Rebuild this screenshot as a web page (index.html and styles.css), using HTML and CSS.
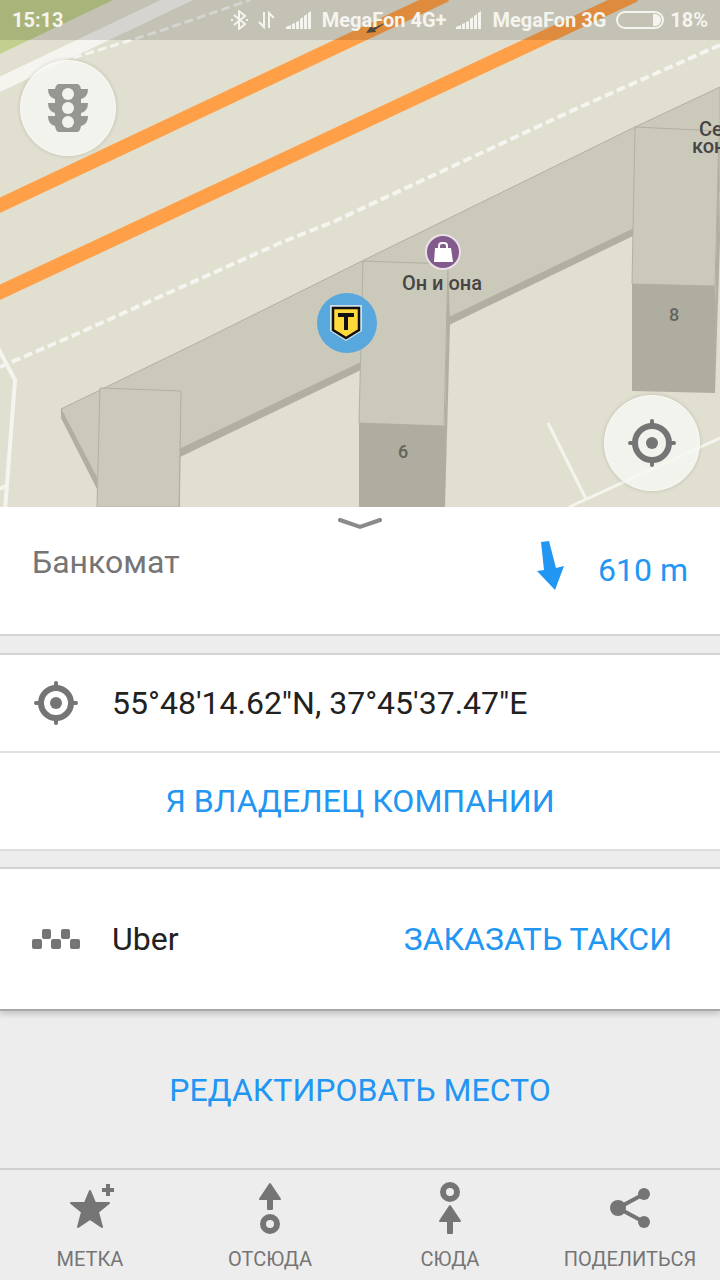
FILE: index.html
```html
<!DOCTYPE html>
<html lang="ru">

<head>
    <meta charset="utf-8">
    <meta name="viewport" content="width=device-width, initial-scale=1">
    <title>Банкомат</title>
    <link rel="stylesheet" href="styles.css">
</head>

<body>
    <!--Map with status bar-->
    <div class="map">
        <svg class="map-canvas" viewBox="0 0 720 507" preserveAspectRatio="xMidYMax slice">
            <!--Park-->
            <path fill="#c3cf8e" d="M0 0h113L0 54z" />

            <!--Roads-->
            <path class="road" stroke-width="14" d="M-10 89L200 -11" />
            <path class="road dashed" stroke-width="3" d="M73 58L157 32L250 0" />
            <path class="road dashed" stroke-width="4" d="M0 367L63 340L280 243L335 221L580 107L720 45" />
            <path class="highway" d="M-10 210L446 -5" />
            <path class="highway" d="M-10 297L635 -5" />
            <path class="road" stroke-width="4" d="M-2 348L15 380L5 510M-2 489L7 486" />
            <path class="road" stroke-width="3" d="M548 423L586 499M569 507L720 438" />
            <path fill="#5d5646" d="M366 33l5-7 2 2 14-6-12 8 1 2z" />

            <!--Buildings-->
            <path class="wall" d="M61 409V418L97 489V470zM180 446V457L361 370V355zM449 310V325L633 236V222z" />
            <path class="roof" d="M61 409L203 340L362 261L635 127L720 87V190L633 229L450 317L360 363L180 449L98 480z" />
            <path class="wall" d="M181 391L180 507H178V391zM448 262L450 325L445 507H443zM719 130L720 240L715 393H713z" />
            <path class="roof" d="M100 388L181 391L179 507H97z" />
            <path class="roof" d="M363 261L448 264L444 426L359 423z" />
            <path class="roof" d="M635 127L719 131L715 286L632 284z" />
            <path class="house" d="M359 423L445 426V507H359z" />
            <path class="house" d="M632 284L715 286V393L632 391z" />

            <!--Places-->
            <text class="house-number" x="403" y="458">6</text>
            <text class="house-number" x="674" y="321">8</text>
            <circle cx="443" cy="252" r="17" fill="#835a8c" stroke="#eadfe8" stroke-width="2" />
            <path fill="#fff" d="M435 248h16l2 14h-19z" />
            <path fill="none" stroke="#fff" stroke-width="2" d="M439 249v-3q0-3 3-3h2q3 0 3 3v3" />
            <text class="place" x="442" y="290">Он и она</text>
            <text class="place place-edge" x="699" y="136">Се<tspan x="692" dy="17">кон</tspan></text>
            <circle cx="347" cy="323" r="30" fill="#58a8de" />
            <path fill="#cfe0ea" d="M330 305h32v26l-16 10-16-10z" />
            <path fill="#ffd93b" stroke="#111" stroke-width="2.5" d="M333 308h26v22l-13 8-13-8z" />
            <path fill="#111" d="M338 313h16v4h-6v13h-4v-13h-6z" />
        </svg>

        <div class="statusbar">
            <span class="clock">15:13</span>
            <svg class="bluetooth" viewBox="0 0 20 20">
                <path d="M4 5l11 9-6 5V1l6 5-11 9" />
                <path d="M1 10h2M16 10h2" />
            </svg>
            <svg class="data" viewBox="0 0 20 20">
                <path d="M6 2v15l-5-5M11 18V3l5 5" />
            </svg>
            <svg class="signal" viewBox="0 0 26 18">
                <path d="M0 18v-2l5-2v4zM6 18v-5l3-1v6zM10 18v-7l3-1v8zM14 18V8l3-2v12zM18 18V5l3-2v15zM22 18V2l3-2v18z" />
            </svg>
            <span class="carrier">MegaFon 4G+</span>
            <svg class="signal" viewBox="0 0 26 18">
                <path d="M0 18v-2l5-2v4zM6 18v-5l3-1v6zM10 18v-7l3-1v8zM14 18V8l3-2v12zM18 18V5l3-2v15zM22 18V2l3-2v18z" />
            </svg>
            <span class="carrier">MegaFon 3G</span>
            <svg class="battery" viewBox="0 0 48 18">
                <rect x="1" y="1" width="46" height="16" rx="8" />
                <path d="M37 3h2a6 6 0 0 1 0 12h-2z" />
            </svg>
            <span>18%</span>
        </div>

        <button class="map-btn traffic" type="button" aria-label="Пробки">
            <svg width="40" height="48" viewBox="0 0 40 48">
                <path fill="#969791" d="M11 0h18q3 0 4 5h7q0 8-7 10v4h7q0 8-7 10v3h7q0 8-7 10-1 6-4 6H11q-3 0-4-6-7-2-7-10h7v-3q-7-2-7-10h7v-4q-7-2-7-10h7q1-5 4-5z" />
                <g fill="#f2f3ec">
                    <circle cx="20" cy="10" r="6" />
                    <circle cx="20" cy="24" r="6" />
                    <circle cx="20" cy="38" r="6" />
                </g>
            </svg>
        </button>
        <button class="map-btn locate" type="button" aria-label="Где я">
            <svg width="48" height="48" viewBox="0 0 48 48">
                <circle cx="24" cy="24" r="17" fill="none" stroke="#757575" stroke-width="6" />
                <circle cx="24" cy="24" r="6" fill="#757575" />
                <path stroke="#757575" stroke-width="4" stroke-linecap="round" d="M24 2v5M24 41v5M2 24h5M41 24h5" />
            </svg>
        </button>
    </div>

    <!--Place summary-->
    <div class="summary">
        <svg class="handle" viewBox="0 0 44 12">
            <path d="M2 2l20 7 20-7" />
        </svg>
        <h1>Банкомат</h1>
        <div class="distance">
            <svg width="28" height="50" viewBox="0 0 28 50">
                <path fill="#2196f3" d="M5 2l8-1 7 27 8-2-9 24L1 31l7-1z" />
            </svg>
            <span>610 m</span>
        </div>
    </div>

    <!--Coordinates-->
    <div class="card">
        <div class="row">
            <svg class="row-icon" viewBox="0 0 48 48">
                <circle cx="24" cy="24" r="15" fill="none" stroke="#757575" stroke-width="6" />
                <circle cx="24" cy="24" r="6" fill="#757575" />
                <path stroke="#757575" stroke-width="4" stroke-linecap="round" d="M24 4v5M24 39v5M4 24h5M39 24h5" />
            </svg>
            <span>55°48'14.62"N, 37°45'37.47"E</span>
        </div>
        <button class="link-btn owner" type="button">Я ВЛАДЕЛЕЦ КОМПАНИИ</button>
    </div>

    <!--Taxi-->
    <div class="card taxi">
        <div class="row">
            <svg class="row-icon" viewBox="0 0 48 48">
                <g fill="#757575">
                    <rect x="0" y="24" width="10" height="10" rx="2" />
                    <rect x="10" y="14" width="9" height="10" rx="2" />
                    <rect x="19" y="24" width="10" height="10" rx="2" />
                    <rect x="29" y="14" width="9" height="10" rx="2" />
                    <rect x="38" y="24" width="10" height="10" rx="2" />
                </g>
            </svg>
            <span>Uber</span>
            <button class="link-btn order" type="button">ЗАКАЗАТЬ ТАКСИ</button>
        </div>
    </div>

    <button class="link-btn edit" type="button">РЕДАКТИРОВАТЬ МЕСТО</button>

    <!--Bottom toolbar-->
    <div class="toolbar">
        <button type="button">
            <svg width="52" height="56" viewBox="0 0 52 56">
                <path stroke-width="2" d="M26 11l5 12h14l-11 9 4 15-12-8-12 8 4-15-11-9h14z" />
                <path d="M42 4h4v4h4v4h-4v4h-4v-4h-4v-4h4z" />
            </svg>
            МЕТКА
        </button>
        <button type="button">
            <svg width="52" height="56" viewBox="0 0 52 56">
                <path stroke-width="2" d="M26 4l10 15H16z" />
                <path d="M23 19h6v10q0 1-1 1h-4q-1 0-1-1z" />
                <circle class="ring" cx="26" cy="44" r="7" />
            </svg>
            ОТСЮДА
        </button>
        <button type="button">
            <svg width="52" height="56" viewBox="0 0 52 56">
                <circle class="ring" cx="26" cy="12" r="7" />
                <path stroke-width="2" d="M26 26l10 15H16z" />
                <path d="M23 41h6v12q0 1-1 1h-4q-1 0-1-1z" />
            </svg>
            СЮДА
        </button>
        <button type="button">
            <svg width="52" height="56" viewBox="0 0 52 56">
                <path class="link-line" d="M40 14L14 28l26 14" />
                <circle cx="14" cy="28" r="8" />
                <circle cx="40" cy="14" r="6" />
                <circle cx="40" cy="42" r="6" />
            </svg>
            ПОДЕЛИТЬСЯ
        </button>
    </div>
</body>

</html>
```
FILE: styles.css
```css
/*global styling*/
* {
    box-sizing: border-box;
    font-family: Roboto, "Noto Sans", sans-serif;
}

/*body styling*/
body {
    display: flex;
    flex-direction: column;
    min-height: 100vh;
    margin: 0;
    background-color: #ededed;
    color: #212121;
    font-size: 32px;
    line-height: 40px;
}

button {
    border: 0;
    padding: 0;
    background: none;
    cursor: pointer;
}

svg {
    display: block;
    flex-shrink: 0;
}

/*map styling*/
.map {
    position: relative;
    flex: 1 1 0;
    min-height: 320px;
    overflow: hidden;
    background-color: #e1dfcf;
}

.map-canvas {
    position: absolute;
    width: 100%;
    height: 100%;
}

.road {
    fill: none;
    stroke: #f5f4ef;
}

.dashed {
    stroke-dasharray: 9 4;
}

.highway {
    fill: none;
    stroke: #ffa048;
    stroke-width: 14;
}

.roof {
    fill: #cbc9ba;
    stroke: #b2b0a1;
    stroke-width: 1;
}

.wall {
    fill: #b1afa0;
}

.house {
    fill: #aeada0;
}

.place {
    fill: #454545;
    font-size: 20px;
    font-weight: 500;
    text-anchor: middle;
}

.place-edge {
    text-anchor: start;
}

.house-number {
    fill: #66655b;
    font-size: 18px;
    font-weight: 500;
    text-anchor: middle;
}

/*status bar styling*/
.statusbar {
    position: absolute;
    top: 0;
    left: 0;
    right: 0;
    display: flex;
    align-items: center;
    height: 40px;
    padding: 0 12px;
    background-color: rgba(0, 0, 0, 0.13);
    color: #f5f4ee;
    font-size: 20px;
    font-weight: 700;
}

.clock {
    margin-right: auto;
}

.carrier {
    margin: 0 10px;
}

.bluetooth,
.data {
    width: 20px;
    height: 20px;
    margin-right: 8px;
    fill: none;
    stroke: #f5f4ee;
    stroke-width: 2;
}

.signal {
    width: 26px;
    height: 18px;
    fill: #f5f4ee;
}

.battery {
    width: 48px;
    height: 18px;
    margin-right: 6px;
}

.battery rect {
    fill: none;
    stroke: #f5f4ee;
    stroke-width: 2;
}

.battery path {
    fill: #f5f4ee;
}

/*round map buttons*/
.map-btn {
    position: absolute;
    display: flex;
    align-items: center;
    justify-content: center;
    width: 96px;
    height: 96px;
    border: 1px solid #fafaf6;
    border-radius: 50%;
    background-color: rgba(245, 247, 241, 0.85);
    box-shadow: 0 0 4px rgba(0, 0, 0, 0.15);
}

.traffic {
    top: 60px;
    left: 20px;
}

.locate {
    right: 20px;
    bottom: 16px;
}

/*summary styling*/
.summary {
    position: relative;
    display: flex;
    justify-content: space-between;
    padding: 33px 32px 44px;
    background-color: #fff;
    border-bottom: 2px solid #d3d3d3;
}

.handle {
    position: absolute;
    top: 11px;
    left: 50%;
    width: 44px;
    height: 12px;
    margin-left: -22px;
    fill: none;
    stroke: #8a8a8a;
    stroke-width: 4;
    stroke-linecap: round;
}

h1 {
    margin: 0;
    padding-top: 2px;
    color: #757575;
    font-size: 32px;
    font-weight: 400;
}

.distance {
    display: flex;
    align-items: flex-end;
    gap: 34px;
    color: #2196f3;
}

/*cards styling*/
.card {
    margin-top: 17px;
    background-color: #fff;
    border-top: 2px solid #d3d3d3;
    border-bottom: 2px solid #dedede;
}

.row {
    display: flex;
    align-items: center;
    gap: 32px;
    height: 96px;
    padding: 0 32px;
}

.row-icon {
    width: 48px;
    height: 48px;
}

.link-btn {
    color: #2196f3;
    font-size: 32px;
    line-height: 40px;
}

.owner {
    display: block;
    width: 100%;
    height: 98px;
    border-top: 2px solid #e3e3e3;
}

.taxi {
    margin-top: 16px;
    border-bottom-color: #a8a8a8;
    box-shadow: 0 4px 5px rgba(0, 0, 0, 0.15);
}

.taxi .row {
    height: 140px;
}

.order {
    margin-left: auto;
    margin-right: 16px;
}

.edit {
    height: 157px;
}

/*bottom toolbar styling*/
.toolbar {
    display: grid;
    grid-template-columns: repeat(4, 1fr);
    border-top: 2px solid #d0d0d0;
}

.toolbar button {
    display: flex;
    flex-direction: column;
    align-items: center;
    height: 110px;
    padding-top: 10px;
    gap: 11px;
    color: #757575;
    font-size: 20px;
    line-height: 24px;
}

.toolbar svg {
    fill: #757575;
    stroke: #757575;
    stroke-width: 0;
    stroke-linejoin: round;
}

.toolbar .ring {
    fill: none;
    stroke-width: 6;
}

.toolbar .link-line {
    fill: none;
    stroke-width: 4;
}
```
